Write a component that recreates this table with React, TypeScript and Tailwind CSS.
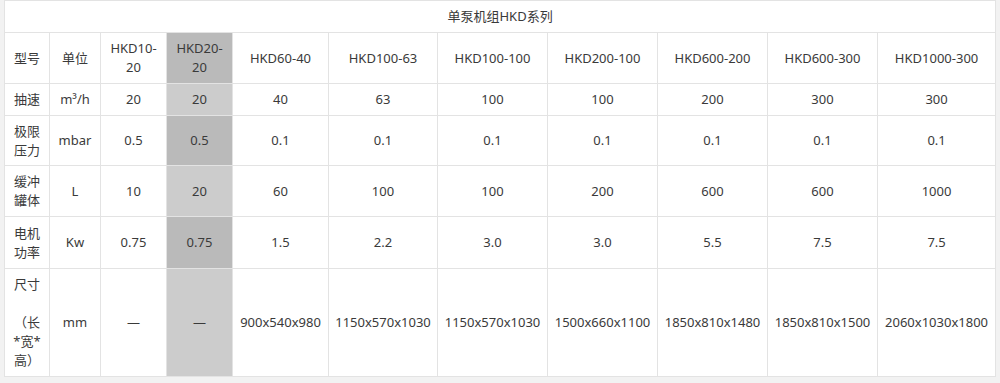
import React from "react"

const cols = [45, 51, 66, 66, 96, 109, 110, 110, 110, 110, 118]

const header = ["型号", "单位", "HKD10-20", "HKD20-20", "HKD60-40", "HKD100-63", "HKD100-100", "HKD200-100", "HKD600-200", "HKD600-300", "HKD1000-300"]

const rows: { h: string; cells: React.ReactNode[] }[] = [
  { h: "h-[32px]", cells: ["抽速", "m³/h", "20", "20", "40", "63", "100", "100", "200", "300", "300"] },
  { h: "h-[50px]", cells: ["极限压力", "mbar", "0.5", "0.5", "0.1", "0.1", "0.1", "0.1", "0.1", "0.1", "0.1"] },
  { h: "h-[51px]", cells: ["缓冲罐体", "L", "10", "20", "60", "100", "100", "200", "600", "600", "1000"] },
  { h: "h-[52px]", cells: ["电机功率", "Kw", "0.75", "0.75", "1.5", "2.2", "3.0", "3.0", "5.5", "7.5", "7.5"] },
  {
    h: "h-[108px]",
    cells: [
      <>尺寸<br /><br />（长*宽*高）</>,
      "mm", "—", "—", "900x540x980", "1150x570x1030", "1150x570x1030", "1500x660x1100", "1850x810x1480", "1850x810x1500", "2060x1030x1800",
    ],
  },
]

export default function App() {
  return (
    <div className="w-[1000px] h-[383px] bg-[#f2f2f2] pl-[4px] font-['Noto_Sans','Noto_Sans_CJK_SC',sans-serif] text-[13px] leading-[19px] text-[#3a3a3a]">
      <table className="table-fixed border-collapse bg-white w-[991px]">
        <colgroup>
          {cols.map((w, i) => (
            <col key={i} style={{ width: w }} />
          ))}
        </colgroup>
        <tbody>
          <tr className="h-[32px]">
            <td colSpan={11} className="border border-[#e3e3e3] text-center align-middle">
              单泵机组HKD系列
            </td>
          </tr>
          <tr className="h-[51px]">
            {header.map((c, i) => (
              <td
                key={i}
                className={`border border-[#e3e3e3] text-center align-middle ${i < 4 ? "px-[8px]" : "px-0"} ${
                  i === 3 ? "bg-[#bababa]" : ""
                }`}
              >
                {c}
              </td>
            ))}
          </tr>
          {rows.map((r, ri) => (
            <tr key={ri} className={r.h}>
              {r.cells.map((c, i) => (
                <td
                  key={i}
                  className={`border border-[#e3e3e3] text-center align-middle ${i < 4 ? "px-[8px]" : "px-0"} ${
                    i === 3 ? (ri % 2 === 0 ? "bg-[#cccccc]" : "bg-[#bababa]") : ""
                  }`}
                >
                  {c}
                </td>
              ))}
            </tr>
          ))}
        </tbody>
      </table>
    </div>
  )
}
